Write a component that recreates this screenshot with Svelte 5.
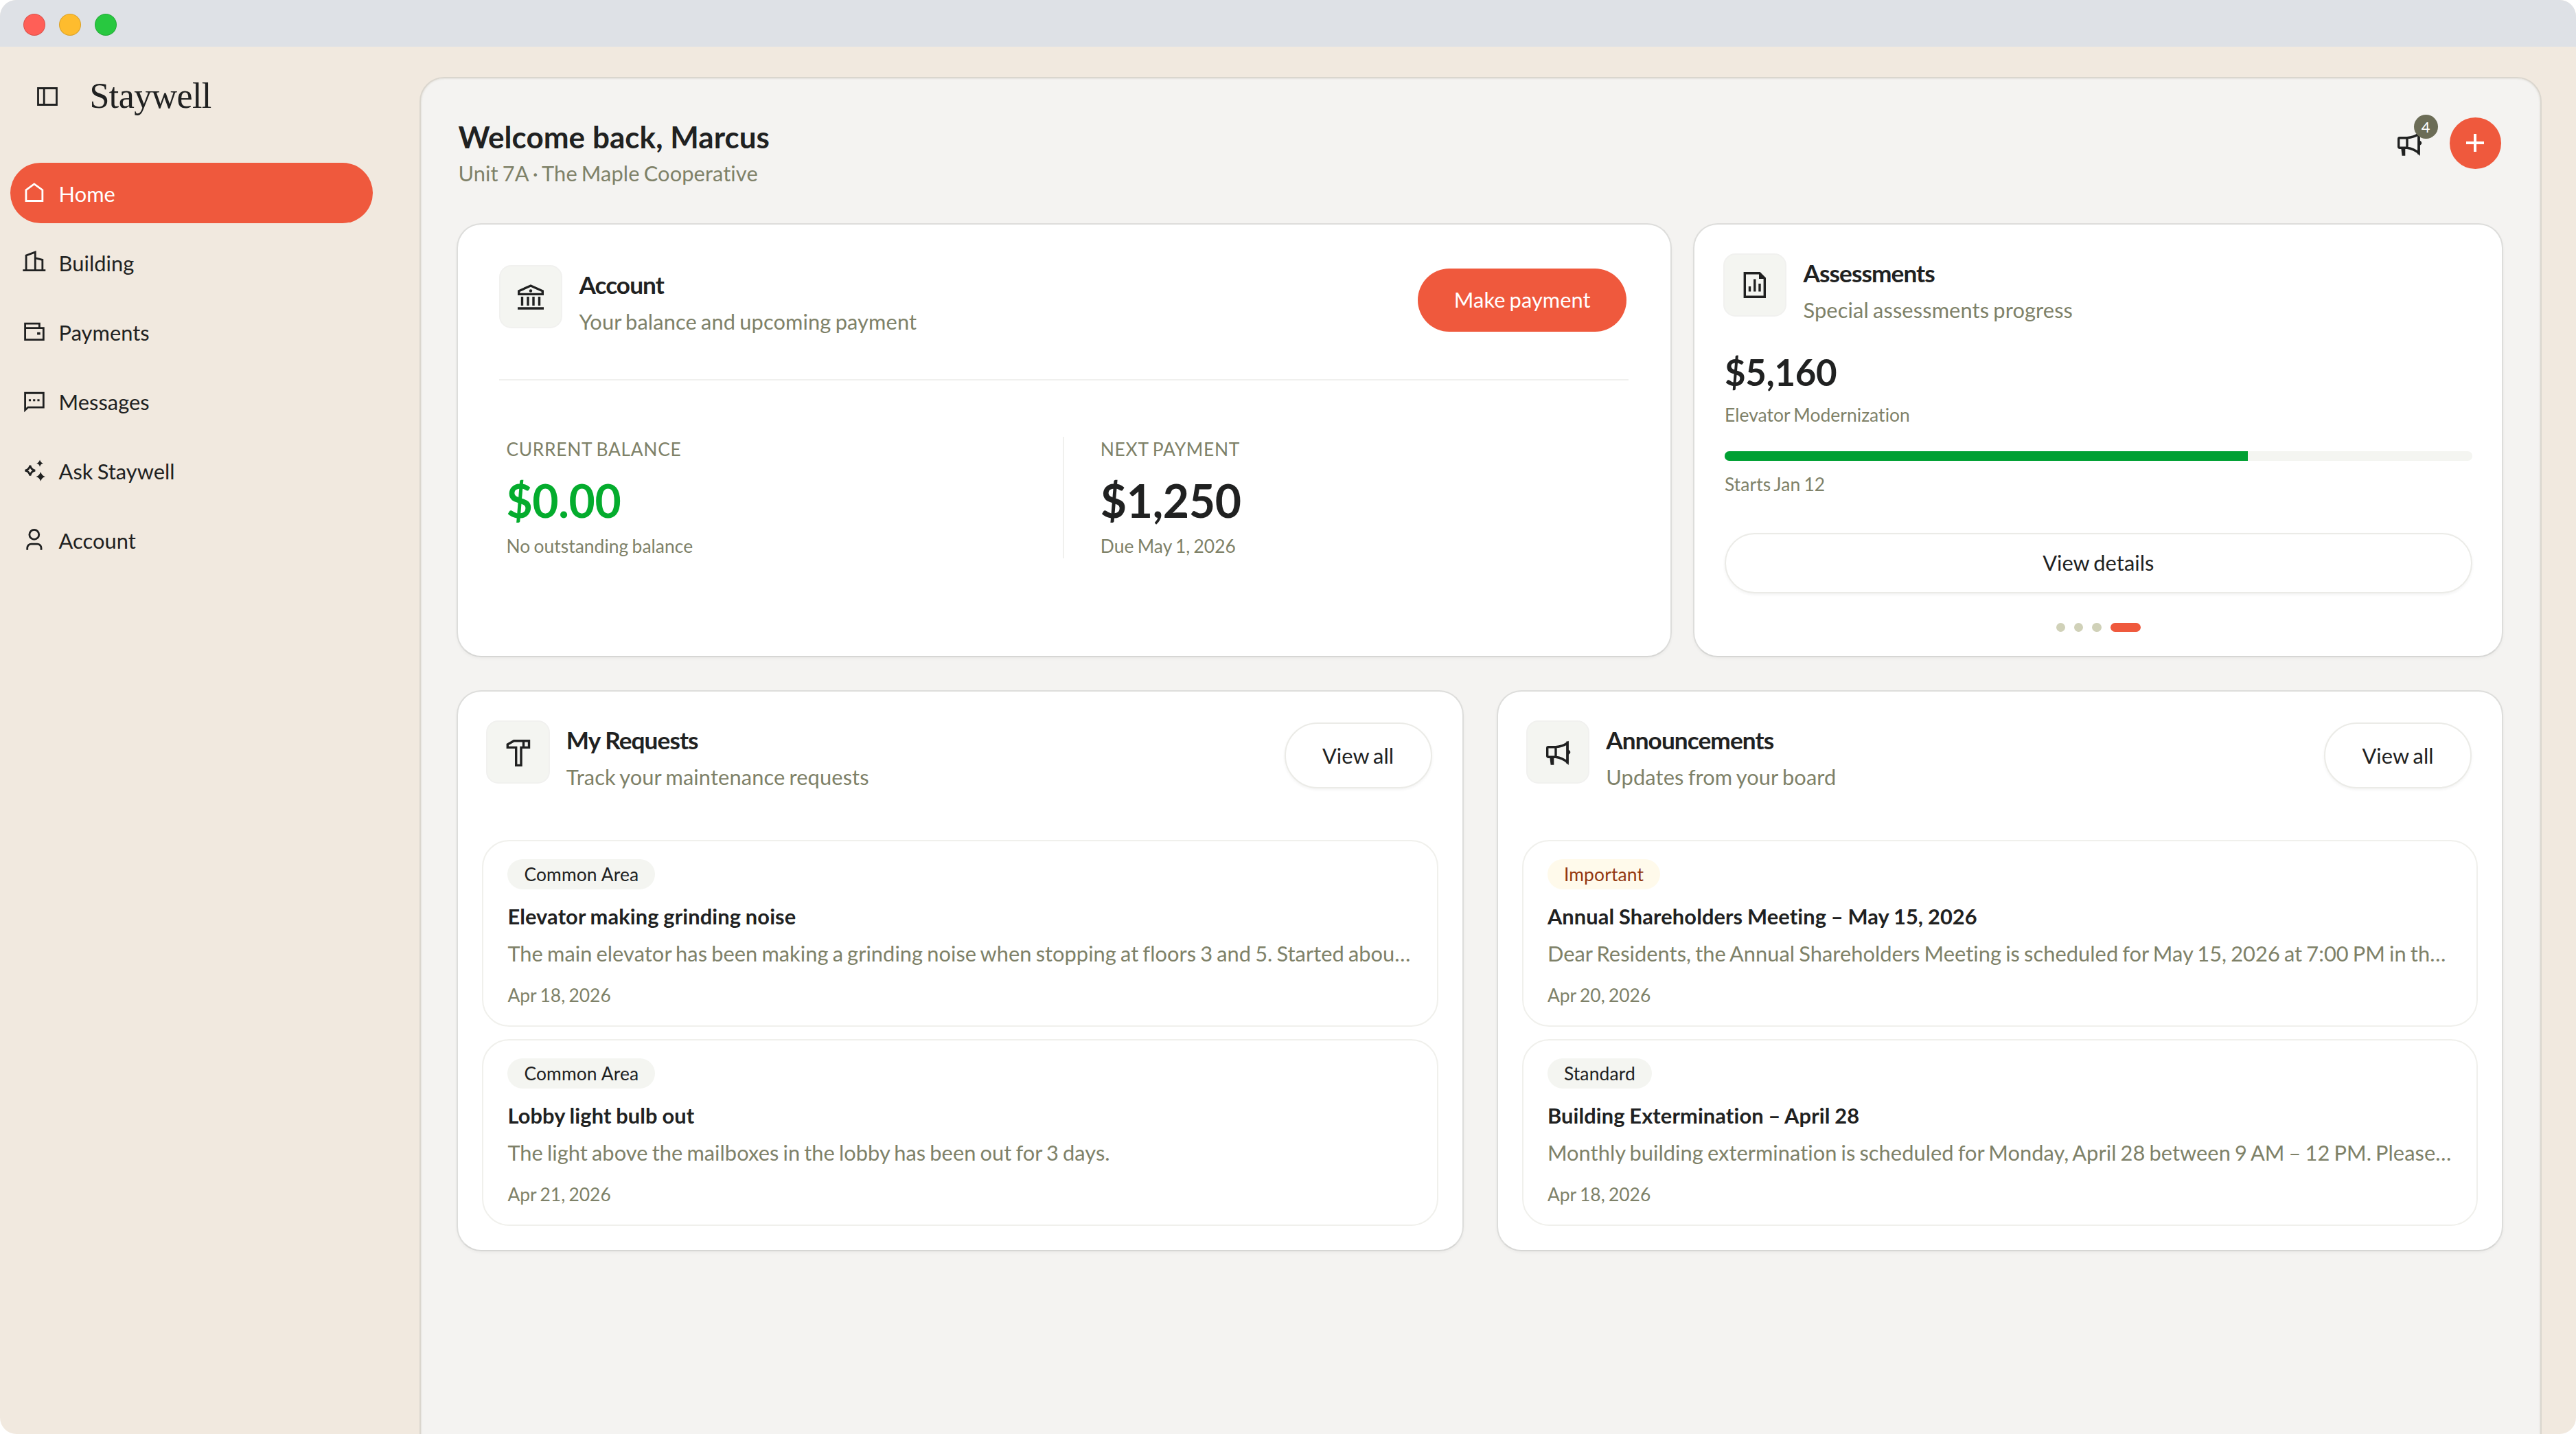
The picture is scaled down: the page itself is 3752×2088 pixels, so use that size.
<script lang="ts">
	type Tone = "neutral" | "warning";

	interface Entry {
		tag: string;
		tone: Tone;
		title: string;
		body: string;
		date: string;
	}

	const nav = [
		{ label: "Home", icon: "home" },
		{ label: "Building", icon: "building" },
		{ label: "Payments", icon: "wallet" },
		{ label: "Messages", icon: "message" },
		{ label: "Ask Staywell", icon: "sparkle" },
		{ label: "Account", icon: "person" },
	];
	let active = $state("Home");

	const slides = 4;
	let slide = $state(3);
	const progress = 70;

	const requests: Entry[] = [
		{
			tag: "Common Area",
			tone: "neutral",
			title: "Elevator making grinding noise",
			body: "The main elevator has been making a grinding noise when stopping at floors 3 and 5. Started abou…",
			date: "Apr 18, 2026",
		},
		{
			tag: "Common Area",
			tone: "neutral",
			title: "Lobby light bulb out",
			body: "The light above the mailboxes in the lobby has been out for 3 days.",
			date: "Apr 21, 2026",
		},
	];

	const announcements: Entry[] = [
		{
			tag: "Important",
			tone: "warning",
			title: "Annual Shareholders Meeting – May 15, 2026",
			body: "Dear Residents, the Annual Shareholders Meeting is scheduled for May 15, 2026 at 7:00 PM in th…",
			date: "Apr 20, 2026",
		},
		{
			tag: "Standard",
			tone: "neutral",
			title: "Building Extermination – April 28",
			body: "Monthly building extermination is scheduled for Monday, April 28 between 9 AM – 12 PM. Please…",
			date: "Apr 18, 2026",
		},
	];
</script>

{#snippet navIcon(name: string)}
	<svg class="nav-icon" viewBox="0 0 24 24">
		{#if name === "home"}
			<path d="M4.8 19.1V9.5L12 4.2l7.3 5.3v9.6z" />
		{:else if name === "building"}
			<path d="M2 19.2h20M4.9 19V6l8-2.9V19M12.9 8.2l6.4 1.7V19" />
		{:else if name === "wallet"}
			<path d="M4 8.2h16.2v10.4H4zM4 8.2V4.3h12.6v3.9" />
			<rect class="solid" x="14.6" y="12" width="2.8" height="2.2" />
		{:else if name === "message"}
			<path d="M4 19.4V4.4h16.2V17H6.6z" />
			<path class="solid" d="M7.2 9.8h1.9v1.9H7.2zM11 9.8h1.9v1.9H11zM14.8 9.8h1.9v1.9h-1.9z" />
		{:else if name === "sparkle"}
			<path d="M8.4 7.2Q9.2 10.8 12.8 11.6 9.2 12.4 8.4 16 7.6 12.4 4 11.6 7.6 10.8 8.4 7.2z" />
			<path class="solid" d="M17 2.1q.6 2.5 3 3.1-2.4.6-3 3.1-.6-2.5-3-3.1 2.4-.6 3-3.1z" />
			<path class="solid" d="M17.7 12.7q.9 3.3 4 4.2-3.1.9-4 4.2-.9-3.3-4-4.2 3.1-.9 4-4.2z" />
		{:else}
			<circle cx="12" cy="6.9" r="4.2" />
			<path d="M5.9 20.4v-1.7a3.5 3.5 0 0 1 3.5-3.5h5.3a3.5 3.5 0 0 1 3.5 3.5v1.7" />
		{/if}
	</svg>
{/snippet}

{#snippet megaphone()}
	<svg class="icon" viewBox="0 0 40 40">
		<path d="M17 12.8H6.2a1.5 1.5 0 0 0-1.5 1.5v11.4a1.5 1.5 0 0 0 1.500 1.5H17zM17 12.8Q27 11.8 34 7v28Q27 28.5 17 27.2" />
		<path class="solid" d="M8.3 28h6v10.7H9.6zM32.4 4.4h3.300v32.300h-3.300zM35.500 16.500q2.800 1.600 2.800 3.800t-2.800 3.800z" />
	</svg>
{/snippet}

{#snippet cardIcon(name: string)}
	<div class="tile">
		{#if name === "megaphone"}
			{@render megaphone()}
		{:else if name === "bank"}
			<svg class="icon" viewBox="0 0 40 40">
				<path d="M2.700 16.400v-4.600L20 4l17.300 7.800v4.600z" />
				<path d="M7.500 20v13M16 20v13M24 20v13M32.500 20v13M1 37h38" />
				<circle class="solid" cx="20" cy="11.500" r="2.200" />
			</svg>
		{:else if name === "report"}
			<svg class="icon" viewBox="0 0 40 40">
				<path d="M5.300 2.700h21.500l7.500 7.500v27H5.300zM12.500 22v7.500M19.800 11.500v18M27 18v11.500" />
				<path class="solid" d="M26 2l9 9h-9z" />
			</svg>
		{:else}
			<svg class="icon" viewBox="0 0 40 40">
				<path d="M4.300 13.400V9l9.200-5.300h22v9.700H24v26h-7.300v-26zM27.500 4v9" />
			</svg>
		{/if}
	</div>
{/snippet}

{#snippet heading(icon: string, title: string, sub: string)}
	<div class="heading">
		{@render cardIcon(icon)}
		<div class="heading-text">
			<h2>{title}</h2>
			<p>{sub}</p>
		</div>
	</div>
{/snippet}

{#snippet listCard(icon: string, title: string, sub: string, entries: Entry[])}
	<section class="card list-card">
		<div class="card-head">
			{@render heading(icon, title, sub)}
			<button class="outline view-all">View all</button>
		</div>
		<div class="entries">
			{#each entries as entry}
				<article class="entry">
					<span class="tag" class:warning={entry.tone === "warning"}>{entry.tag}</span>
					<h3>{entry.title}</h3>
					<p>{entry.body}</p>
					<time>{entry.date}</time>
				</article>
			{/each}
		</div>
	</section>
{/snippet}

<div class="window">
	<div class="titlebar">
		<span class="light red"></span>
		<span class="light yellow"></span>
		<span class="light green"></span>
	</div>
	<div class="app">
		<aside>
			<div class="brand">
				<svg class="toggle" viewBox="0 0 30 27">
					<path d="M1.5 1.5h27v24h-27zM10.200 1.500v24" />
				</svg>
				<span>Staywell</span>
			</div>
			<nav>
				{#each nav as item}
					<button class="nav-item" class:active={active === item.label} onclick={() => (active = item.label)}>
						{@render navIcon(item.icon)}
						<span>{item.label}</span>
					</button>
				{/each}
			</nav>
		</aside>

		<main>
			<header>
				<div class="welcome">
					<h1>Welcome back, Marcus</h1>
					<p>Unit 7A · The Maple Cooperative</p>
				</div>
				<div class="actions">
					<div class="notify">
						{@render megaphone()}
						<span class="count">4</span>
					</div>
					<button class="add" aria-label="Add">
						<svg viewBox="0 0 26 26"><path d="M13 0v26M0 13h26" /></svg>
					</button>
				</div>
			</header>

			<div class="row top">
				<section class="card account">
					<div class="card-head">
						{@render heading("bank", "Account", "Your balance and upcoming payment")}
						<button class="primary">Make payment</button>
					</div>
					<div class="stats">
						<div class="stat">
							<span class="label">CURRENT BALANCE</span>
							<strong class="paid">$0.00</strong>
							<span class="hint">No outstanding balance</span>
						</div>
						<div class="stat">
							<span class="label">NEXT PAYMENT</span>
							<strong>$1,250</strong>
							<span class="hint">Due May 1, 2026</span>
						</div>
					</div>
				</section>

				<section class="card assessments">
					{@render heading("report", "Assessments", "Special assessments progress")}
					<div class="assessment">
						<strong>$5,160</strong>
						<span class="hint">Elevator Modernization</span>
						<div class="bar"><div class="fill" style="width: {progress}%"></div></div>
						<span class="hint">Starts Jan 12</span>
						<button class="outline details">View details</button>
						<div class="dots">
							{#each { length: slides } as _, i}
								<button class="dot" class:current={i === slide} aria-label="Slide {i + 1}" onclick={() => (slide = i)}></button>
							{/each}
						</div>
					</div>
				</section>
			</div>

			<div class="row bottom">
				{@render listCard("hammer", "My Requests", "Track your maintenance requests", requests)}
				{@render listCard("megaphone", "Announcements", "Updates from your board", announcements)}
			</div>
		</main>
	</div>
</div>

<style>
	:global(body) {
		margin: 0;
		background: #fff;
	}
	.window {
		--ink: #202121;
		--muted: #7e8168;
		--accent: #ef593d;
		--soft: #f4f5f1;
		display: flex;
		flex-direction: column;
		width: 3752px;
		height: 2088px;
		overflow: hidden;
		border-radius: 24px;
		background: #f1e9df;
		color: var(--ink);
		font-family: Lato, sans-serif;
		font-size: 30.8px;
		line-height: 44px;
		letter-spacing: 0.05px;
	}
	.window :is(p, .hint, time, button) {
		word-spacing: -0.06em;
	}
	h1,
	h2,
	h3,
	p {
		margin: 0;
	}
	button {
		display: flex;
		align-items: center;
		justify-content: center;
		box-sizing: border-box;
		margin: 0;
		padding: 0;
		border: 0;
		background: none;
		color: inherit;
		font: inherit;
		letter-spacing: inherit;
		cursor: pointer;
	}
	svg {
		display: block;
		flex: none;
		overflow: visible;
		fill: none;
		stroke: currentColor;
	}
	svg .solid {
		fill: currentColor;
		stroke: none;
	}
	.titlebar {
		flex: none;
		display: flex;
		align-items: center;
		gap: 20px;
		box-sizing: border-box;
		height: 68px;
		padding: 4px 0 0 34px;
		background: #dee1e6;
	}
	.light {
		box-sizing: border-box;
		width: 32px;
		height: 32px;
		border: 1px solid rgba(0, 0, 0, 0.14);
		border-radius: 50%;
	}
	.red {
		background: #ff5f57;
	}
	.yellow {
		background: #febc2e;
	}
	.green {
		background: #28c840;
	}
	.app {
		flex: 1;
		display: flex;
		min-height: 0;
	}
	aside {
		flex: none;
		box-sizing: border-box;
		width: 611px;
		padding: 42px 68px 0 15px;
	}
	.brand {
		display: flex;
		align-items: center;
		gap: 47px;
		height: 60px;
		padding-left: 38.5px;
		font-family: "Liberation Serif", serif;
		font-size: 52px;
		line-height: 60px;
		letter-spacing: -0.6px;
	}
	.toggle {
		width: 30px;
		height: 27px;
		stroke-width: 2.8;
	}
	nav {
		display: flex;
		flex-direction: column;
		gap: 13.2px;
		margin-top: 67px;
	}
	.nav-item {
		justify-content: flex-start;
		gap: 15.6px;
		height: 88px;
		padding-left: 15.4px;
		border-radius: 44px;
		word-spacing: normal;
	}
	.nav-item span {
		padding-top: 3px;
	}
	.nav-item.active {
		background: var(--accent);
		color: #fff;
	}
	.nav-icon {
		width: 39.6px;
		height: 39.6px;
		stroke-width: 1.7;
	}
	main {
		flex: none;
		box-sizing: border-box;
		width: 3090.5px;
		height: 2100px;
		margin-top: 44px;
		padding: 57px 53.5px 0 52.4px;
		border: 2px solid #dad6ce;
		border-radius: 36px;
		background: #f4f3f1;
		box-shadow: inset 0 0 3px rgba(90, 80, 50, 0.18);
	}
	header {
		display: flex;
		justify-content: space-between;
		height: 154px;
	}
	h1 {
		padding-top: 2px;
		font-size: 44px;
		line-height: 52.8px;
		font-weight: 700;
	}
	.welcome {
		padding-left: 2px;
	}
	.welcome p {
		margin-top: 5.6px;
		color: var(--muted);
		letter-spacing: 0.1px;
	}
	.actions {
		display: flex;
		align-items: center;
		gap: 38.5px;
		height: 74.8px;
		padding-right: 3.5px;
	}
	.icon {
		width: 40px;
		height: 40px;
		stroke-width: 3.4;
	}
	.notify {
		position: relative;
	}
	.count {
		position: absolute;
		top: -21.5px;
		right: -21.5px;
		width: 35.2px;
		height: 35.2px;
		border-radius: 50%;
		background: #6b6c56;
		color: #fff;
		font-size: 22px;
		line-height: 36px;
		text-align: center;
	}
	.add {
		width: 74.8px;
		height: 74.8px;
		border-radius: 50%;
		background: var(--accent);
		color: #fff;
	}
	.add svg {
		width: 26px;
		height: 26px;
		stroke-width: 4;
	}
	.row {
		display: grid;
	}
	.top {
		grid-template-columns: 3fr 2fr;
		gap: 30.8px;
		height: 632px;
	}
	.bottom {
		grid-template-columns: minmax(0, 1fr) minmax(0, 1fr);
		gap: 48.4px;
		margin-top: 48px;
	}
	.card {
		box-sizing: border-box;
		border: 2px solid #dddddb;
		border-bottom-color: #d6d6d4;
		border-radius: 36px;
		background: #fff;
		box-shadow: 0 2px 4px rgba(0, 0, 0, 0.04);
	}
	.card-head {
		display: flex;
		justify-content: space-between;
		align-items: flex-start;
	}
	.heading {
		display: flex;
		gap: 24px;
	}
	.tile {
		flex: none;
		display: flex;
		align-items: center;
		justify-content: center;
		box-sizing: border-box;
		width: 92.4px;
		height: 92.4px;
		border: 2px solid #f1f1ef;
		border-radius: 17.6px;
		background: var(--soft);
	}
	.heading-text {
		padding-top: 6px;
	}
	h2 {
		font-size: 35.2px;
		line-height: 44px;
		font-weight: 700;
		letter-spacing: -0.92px;
	}
	.heading-text p {
		margin-top: 10.6px;
		color: var(--muted);
		letter-spacing: 0.12px;
	}
	.account {
		padding: 59px 61.6px 0 59.6px;
	}
	.account .card-head {
		height: 166px;
		border-bottom: 2px solid #f0f0ee;
	}
	.primary {
		margin: 4.6px 2.2px 0 0;
		width: 304.5px;
		height: 92.4px;
		border-radius: 46.2px;
		background: var(--accent);
		color: #fff;
	}
	.stats {
		display: grid;
		grid-template-columns: 811px 1fr;
		margin-top: 82px;
		padding-left: 10.4px;
	}
	.stat {
		display: flex;
		flex-direction: column;
	}
	.stat + .stat {
		padding-left: 52.4px;
		border-left: 2px solid #f0f0ee;
	}
	.label,
	.hint {
		color: var(--muted);
		font-size: 26.4px;
		line-height: 36.4px;
	}
	.label {
		letter-spacing: 0.7px;
		word-spacing: -0.06em;
	}
	.stat strong {
		margin: 16.4px 0 8.6px;
		font-size: 66px;
		line-height: 79.2px;
		letter-spacing: -0.33px;
	}
	.paid {
		color: #04ac2d;
	}
	.assessments {
		padding: 42px 42px 0;
	}
	.assessment {
		display: flex;
		flex-direction: column;
		margin-top: 33.4px;
		padding: 0 1.5px 0 2px;
	}
	.assessment strong {
		margin-bottom: 9px;
		font-size: 52.8px;
		line-height: 70.4px;
		letter-spacing: -0.37px;
	}
	.bar {
		height: 13.2px;
		margin: 34.6px 0 16.6px;
		overflow: hidden;
		border-radius: 6.6px;
		background: var(--soft);
	}
	.fill {
		height: 100%;
		background: #00a033;
	}
	.outline {
		border: 2px solid #ebebe7;
		border-radius: 49px;
		background: #fff;
		box-shadow: 0 2px 4px rgba(0, 0, 0, 0.05);
	}
	.details {
		height: 88px;
		margin-top: 52px;
		padding-top: 1px;
	}
	.dots {
		display: flex;
		justify-content: center;
		gap: 13.2px;
		margin-top: 43.4px;
	}
	.dot {
		width: 13.2px;
		height: 13.2px;
		border-radius: 6.6px;
		background: #d0d1b8;
	}
	.dot.current {
		width: 44px;
		background: var(--accent);
	}
	.list-card {
		padding: 42px 35px 35px;
	}
	.list-card .card-head {
		height: 174.4px;
		padding: 0 9px 0 6px;
	}
	.view-all {
		width: 215px;
		height: 96px;
		margin-top: 3px;
		padding-top: 1px;
	}
	.entries {
		display: flex;
		flex-direction: column;
		gap: 18px;
	}
	.entry {
		display: flex;
		flex-direction: column;
		align-items: flex-start;
		box-sizing: border-box;
		height: 271.8px;
		padding: 26px 0 0 35px;
		border: 2px solid #f0f0ec;
		border-radius: 39.6px;
		white-space: nowrap;
	}
	.tag {
		box-sizing: border-box;
		height: 44px;
		padding: 0 24px;
		border-radius: 22px;
		background: var(--soft);
		font-size: 26.4px;
		line-height: 45px;
		letter-spacing: 0.15px;
	}
	.tag.warning {
		background: #fffaeb;
		color: #93370d;
	}
	h3 {
		padding-top: 17.4px;
		font-size: 30.8px;
		font-weight: 700;
		letter-spacing: 0.12px;
		word-spacing: -0.9px;
	}
	.entry p {
		margin-top: 10.6px;
		color: var(--muted);
	}
	time {
		margin-top: 20.4px;
		color: var(--muted);
		font-size: 26.4px;
		line-height: 35.2px;
	}
</style>
